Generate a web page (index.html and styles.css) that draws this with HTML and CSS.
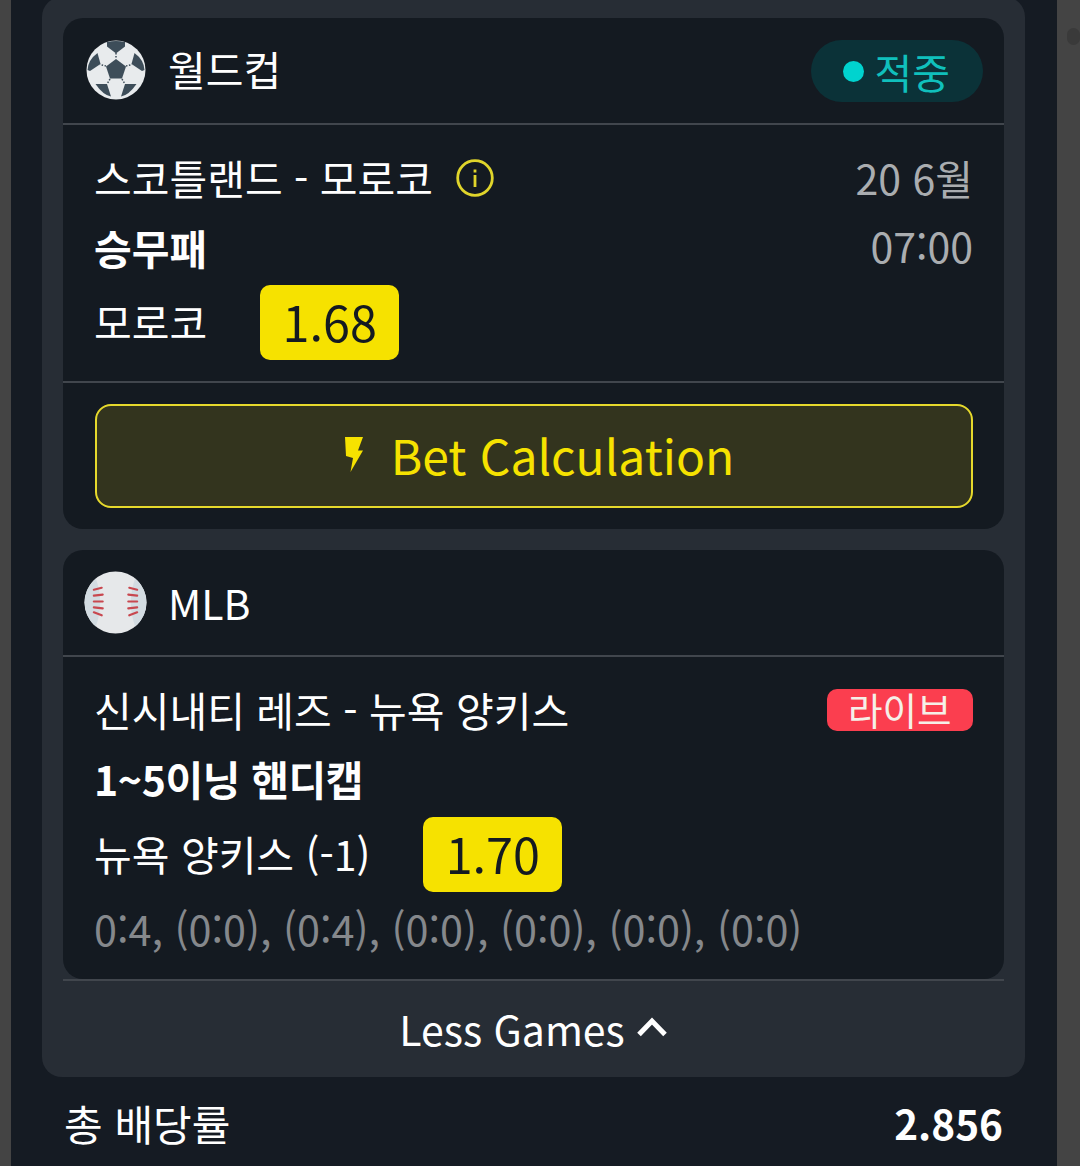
FILE: index.html
```html
<!DOCTYPE html>
<html lang="ko">
<head>
<meta charset="utf-8">
<title>Bet slip</title>
<link rel="stylesheet" href="styles.css">
</head>
<body>
<div class="frame">
  <main class="sheet">
    <section class="panel">
      <article class="card">
        <header class="card-head">
          <div class="league">
            <svg class="sport" viewBox="0 0 60 60" aria-hidden="true">
              <circle cx="30" cy="30" r="29.500" fill="#e8ebed"/>
              <g fill="#3d4d59">
                <path d="M30 19 40 26.500 36 38.500H24L20 26.500Z"/>
                <path d="M21 2Q30 0 39 2L39 6.500 30.500 13H29.500L21 6.500Z"/>
                <path d="M11.500 13 14.500 24 4 31 1.500 30Q2 20 11.500 13Z"/>
                <path d="M48.500 13Q58 20 58.500 30L56 31 45.500 24Z"/>
                <path d="M9.500 44H21L25 56.500Q17 55 9.500 44Z"/>
                <path d="M50.500 44H39L35 56.500Q43 55 50.500 44Z"/>
              </g>
              <path d="M30 13V19M40 26 46 24.500M20 26 14 24.500M24 39 21 44M36 39 39 44" stroke="#3d4d59" stroke-width="1.500" stroke-dasharray="1.500 1.500" fill="none"/>
            </svg>
            <span class="league-name league-name-ko">월드컵</span>
          </div>
          <div class="status"><span class="status-dot"></span>적중</div>
        </header>
        <div class="card-body">
          <div class="row">
            <div class="match">스코틀랜드 - 모로코
              <svg class="info" viewBox="0 0 38 38" aria-hidden="true">
                <circle cx="19" cy="19" r="17.300" fill="none" stroke="#e0d52b" stroke-width="2.800"/>
                <rect x="17.600" y="16" width="2.800" height="12" fill="#e0d52b"/>
                <rect x="17.600" y="10.500" width="2.800" height="3" fill="#e0d52b"/>
              </svg>
            </div>
            <div class="meta">20 6월</div>
          </div>
          <div class="row row-market">
            <div class="market">승무패</div>
            <div class="meta">07:00</div>
          </div>
          <div class="pick">
            <span class="pick-name">모로코</span>
            <span class="odds">1.68</span>
          </div>
        </div>
        <div class="card-action">
          <button class="calc" type="button">
            <svg class="bolt" viewBox="0 0 18 35" aria-hidden="true"><path d="M0 0H18L13 13.500H18L5.500 35 8 21 1 19Z" fill="#f6e200"/></svg>
            Bet Calculation
          </button>
        </div>
      </article>

      <article class="card">
        <header class="card-head">
          <div class="league">
            <svg class="sport sport-ball" viewBox="0 0 64 64" aria-hidden="true">
              <circle cx="32" cy="32" r="31.500" fill="#e6e8ea"/>
              <path d="M52 7.700A31.500 31.500 0 0 1 52 56.300Q43 32 52 7.700Z" fill="#d3dce2"/>
              <path d="M12 7.700A31.500 31.500 0 0 0 12 56.300Q21 32 12 7.700Z" fill="#d3dce2"/>
              <g stroke="#c8474f" stroke-width="2.200" stroke-linecap="round" fill="none">
                <path d="M10 19 18 17M10 25 19 24M10 31 19 31M10 37 19 38M10 42 18 45"/>
                <path d="M54 19 46 17M54 25 45 24M54 31 45 31M54 37 45 38M54 42 46 45"/>
              </g>
            </svg>
            <span class="league-name">MLB</span>
          </div>
        </header>
        <div class="card-body card-body-last">
          <div class="row">
            <div class="match">신시내티 레즈 - 뉴욕 양키스</div>
            <div class="live">라이브</div>
          </div>
          <div class="row row-market">
            <div class="market market-tight">1~5이닝 핸디캡</div>
          </div>
          <div class="pick">
            <span class="pick-name">뉴욕 양키스 (-1)</span>
            <span class="odds">1.70</span>
          </div>
          <div class="score">0:4, (0:0), (0:4), (0:0), (0:0), (0:0), (0:0)</div>
        </div>
      </article>

      <button class="less" type="button">
        Less Games
        <svg class="chevron" viewBox="0 0 32 20" aria-hidden="true"><path d="M3 17.500 16 4 29 17.500" fill="none" stroke="#fff" stroke-width="5"/></svg>
      </button>
    </section>
    <div class="total">
      <span class="total-label">총 배당률</span>
      <span class="total-value">2.856</span>
    </div>
  </main>
  <aside class="gutter"><span class="thumb"></span></aside>
</div>
</body>
</html>
```
FILE: styles.css
```css
* { box-sizing: border-box; }
html, body { margin: 0; height: 100%; overflow: hidden; background: #444444; }
body { font-family: "Noto Sans CJK KR", "Noto Sans", sans-serif; color: #fff; }

.frame { display: flex; height: 1166px; padding-left: 11px; }
.sheet { width: 1046px; height: 1166px; background: #151b23; padding: 0 32px 0 31px; flex: none; }
.gutter { flex: 1; padding: 28px 0 0 10px; }
.thumb { display: block; width: 13px; height: 17px; border-radius: 7px; background: #3a3a3a; }

.panel { display: flex; flex-direction: column; gap: 21px; margin-top: -3px; padding: 21px 21px 0; background: #272d35; border-radius: 20px; }
.card { background: #141a21; border-radius: 20px; }

.card-head { display: flex; align-items: center; justify-content: space-between; height: 107px; padding: 0 21px 2px 23px; border-bottom: 2px solid #41464d; }
.league { display: flex; align-items: center; gap: 23px; }
.sport { width: 60px; height: 60px; flex: none; }
.sport-ball { width: 63px; height: 63px; margin: 1px -2px 0; }
.league-name { font-size: 41px; line-height: 54px; }
.league-name-ko { padding-bottom: 3px; margin-left: -1px; }

.status { display: flex; align-items: center; gap: 11px; height: 62px; margin-top: 2px; padding: 0 33px 0 32px; background: #0b3238; border-radius: 31px; color: #10c0bc; font-size: 41px; }
.status-dot { width: 21px; height: 21px; margin-top: 1px; border-radius: 50%; background: #00d3cf; }

.card-body { padding: 26px 31px 21px; border-bottom: 2px solid #41464d; }
.card-body-last { padding-bottom: 23px; border-bottom: 0; }
.row { display: flex; align-items: center; justify-content: space-between; height: 56px; }
.row-market { height: 69px; margin-top: 6px; }
.match { display: flex; align-items: center; gap: 24px; padding-bottom: 4px; font-size: 41px; line-height: 56px; }
.info { width: 38px; height: 38px; flex: none; margin: 2px 0 0 -1px; }
.meta { padding-bottom: 5px; color: #aaadb0; font-size: 41px; line-height: 56px; }
.market { padding-bottom: 2px; font-size: 41px; font-weight: 700; line-height: 56px; }
.market-tight { padding-bottom: 4px; letter-spacing: -0.4px; }
.pick { display: flex; align-items: center; gap: 53px; height: 75px; margin-top: 3px; }
.pick-name { padding-bottom: 4px; font-size: 41px; }
.odds { display: flex; align-items: center; justify-content: center; width: 139px; height: 75px; padding-bottom: 4px; border-radius: 10px; background: #f6e200; color: #141a21; font-size: 48.500px; }
.score { margin-top: 8px; color: #85888c; font-size: 41.350px; line-height: 56px; }

.card-action { padding: 21px 31px 21px 32px; }
.calc { display: flex; align-items: center; justify-content: center; gap: 28px; width: 100%; height: 104px; padding: 0 0 4px 13px; border: 2px solid #e6d92c; border-radius: 16px; background: #33341e; color: #f6e200; font: inherit; font-size: 48px; }
.bolt { width: 18px; height: 35px; margin-left: -2px; }

.live { height: 42px; margin: -2px 0 0 0; padding: 0 21.500px; border-radius: 10px; background: #fb3e4f; color: #f5f0e8; font-size: 37.500px; line-height: 40px; }

.less { display: flex; align-items: center; justify-content: center; gap: 11px; height: 98px; margin: -21px 0 0; padding: 0 0 2px; border: 0; border-top: 2px solid #41464d; background: none; color: #fff; font: inherit; font-size: 41px; }
.chevron { width: 32px; height: 20px; margin-top: -2px; }

.total { display: flex; align-items: center; justify-content: space-between; height: 94px; padding: 0 22px 4px; }
.total-label { font-size: 42px; }
.total-value { font-size: 40.500px; font-weight: 700; }
```
